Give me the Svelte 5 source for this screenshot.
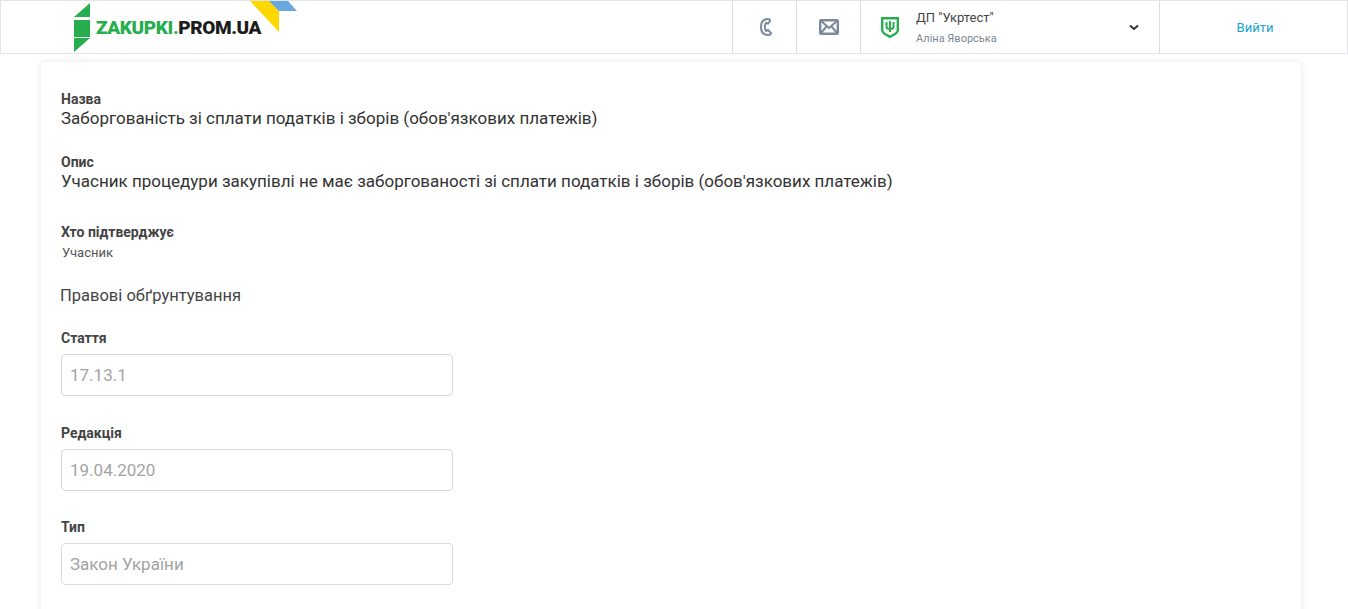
<script>
  const fields = [
    { label: 'Стаття', value: '17.13.1' },
    { label: 'Редакція', value: '19.04.2020' },
    { label: 'Тип', value: 'Закон України' }
  ];
</script>

<header class="topbar">
  <div class="brand">
    <svg class="logo-mark" width="18" height="50" viewBox="0 0 18 50">
      <polygon points="16,0 16,14 0,14" fill="#27ae4f" />
      <rect x="0" y="17" width="16" height="17" fill="#27ae4f" />
      <polygon points="0,35 16,35 0,49" fill="#27ae4f" />
    </svg>
    <span class="logo-text"><span class="green">ZAKUPKI.</span>PROM.UA</span>
    <svg class="logo-corner" width="48" height="32" viewBox="0 0 48 32">
      <polygon points="0,0 20,0 29,10 29,31" fill="#ffd800" />
      <polygon points="19,0 38,0 47,10 29,10" fill="#6aa9e0" />
    </svg>
  </div>

  <a class="cell icon-cell" href="#phone" aria-label="Телефон">
    <svg width="14" height="20" viewBox="0 0 14 20" fill="none" stroke="#7b8a9c" stroke-width="2">
      <path d="M10 2C5 2 3 5.500 3 10s2 8 7 8c2 0 3-1 3-2l-3-3-2 1C6.500 12 6.500 8 8 6l2 .5L12 4c0-1-1-2-2-2z" />
    </svg>
  </a>
  <a class="cell icon-cell" href="#mail" aria-label="Пошта">
    <svg width="20" height="16" viewBox="0 0 20 16">
      <rect x="1.200" y="1.200" width="17.600" height="13.600" rx="1" fill="none" stroke="#7b8a9c" stroke-width="2.400" />
      <path d="M1.500 1.500 10 9l8.500-7.500M1.500 14.500 7.500 7.500M18.500 14.500 12.500 7.500" fill="none" stroke="#7b8a9c" stroke-width="2" />
    </svg>
  </a>
  <div class="cell account">
    <svg width="18" height="21" viewBox="0 0 18 21">
      <path d="M1.200 1.200h15.600v12c0 3-4 4.800-7.800 6.600-3.800-1.800-7.800-3.600-7.800-6.600z" fill="none" stroke="#27ae4f" stroke-width="2.400" />
      <path d="M9 4v11M5.500 5v5c0 1.500 1.500 2 3.500 2s3.500-.5 3.500-2V5" fill="none" stroke="#27ae4f" stroke-width="2" />
    </svg>
    <div class="who">
      <div class="org">ДП "Укртест"</div>
      <div class="person">Аліна Яворська</div>
    </div>
    <svg class="chevron" width="10" height="7" viewBox="0 0 10 7">
      <path d="M1 1.500 5 5l4-3.500" fill="none" stroke="#333" stroke-width="2" />
    </svg>
  </div>
  <a class="cell login" href="#login">Вийти</a>
</header>

<main class="card">
  <section class="block top">
    <div class="caption">Назва</div>
    <div class="big">Заборгованість зі сплати податків і зборів (обов'язкових платежів)</div>
  </section>
  <section class="block second">
    <div class="caption">Опис</div>
    <div class="big">Учасник процедури закупівлі не має заборгованості зі сплати податків і зборів (обов'язкових платежів)</div>
  </section>
  <section class="block third">
    <div class="caption">Хто підтверджує</div>
    <div class="small">Учасник</div>
  </section>

  <h2>Правові обґрунтування</h2>

  {#each fields as f}
    <div class="field">
      <div class="caption">{f.label}</div>
      <input type="text" placeholder={f.value} disabled />
    </div>
  {/each}
</main>

<style>
  :global(body) {
    background: #fff;
    font-family: Roboto, 'Liberation Sans', sans-serif;
    color: #333;
    height: 609px;
    overflow: hidden;
  }

  .topbar {
    display: flex;
    height: 54px;
    box-sizing: border-box;
    border: 1px solid #e3e4e8;
    background: #fff;
  }

  .brand {
    position: relative;
    flex: 1;
    display: flex;
    align-items: center;
    padding-left: 73px;
    gap: 4px;
  }

  .logo-mark {
    margin-top: 1px;
  }

  .logo-text {
    font-family: Roboto, 'Liberation Sans', sans-serif;
    font-weight: 900;
    font-size: 19px;
    letter-spacing: -0.4px;
    color: #1c1c1c;
    margin-top: 1px;
  }

  .green {
    color: #27ae4f;
  }

  .logo-corner {
    position: absolute;
    left: 249px;
    top: 0;
  }

  .cell {
    display: flex;
    align-items: center;
    border-left: 1px solid #dcdde2;
    text-decoration: none;
  }

  .icon-cell {
    width: 63px;
    justify-content: center;
  }

  .account {
    width: 298px;
  }

  .account > svg:first-child {
    margin-left: 20px;
  }

  .who {
    margin-left: 17px;
    padding-top: 2px;
    flex: 1;
  }

  .org {
    font-size: 13px;
    line-height: 16px;
    color: #444;
  }

  .person {
    font-size: 11px;
    line-height: 14px;
    margin-top: 6px;
    color: #7d8797;
  }

  .chevron {
    margin-right: 20px;
  }

  .login {
    width: 188px;
    justify-content: center;
    padding-left: 3px;
    box-sizing: border-box;
    font-size: 13px;
    color: #13a4d3;
  }

  .card {
    margin: 8px 47px 0 41px;
    height: 600px;
    padding: 29px 20px 0;
    background: #fff;
    border-radius: 4px;
    box-shadow: 0 0 6px rgba(60, 80, 130, 0.14);
  }

  .caption {
    font-size: 14px;
    line-height: 16px;
    font-weight: 700;
    color: #444;
  }

  .big {
    font-size: 17px;
    line-height: 22px;
    color: #333;
  }

  .second {
    margin-top: 25px;
  }

  .third {
    margin-top: 32px;
  }

  .small {
    font-size: 13px;
    line-height: 18px;
    margin-top: 4px;
    color: #555;
    padding-left: 1px;
  }

  h2 {
    margin: 24px 0 0 -1px;
    font-size: 16.500px;
    line-height: 20px;
    font-weight: 400;
    color: #444;
  }

  .field {
    margin-bottom: 28.500px;
  }

  h2 + .field {
    margin-top: 24px;
  }

  .field input {
    display: block;
    width: 392px;
    height: 42px;
    box-sizing: border-box;
    margin-top: 8px;
    padding: 0 8px;
    border: 1px solid #d9d9de;
    border-radius: 4px;
    background: #fff;
    font: 17px Roboto, 'Liberation Sans', sans-serif;
  }

  .field input::placeholder {
    color: #a3a3a3;
    opacity: 1;
  }
</style>
